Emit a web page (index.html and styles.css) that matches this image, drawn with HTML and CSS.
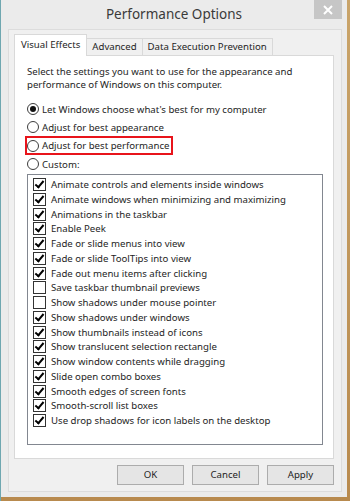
FILE: index.html
```html
<!DOCTYPE html>
<html>
<head>
<meta charset="utf-8">
<link rel="stylesheet" href="styles.css">
</head>
<body>
<div class="window">
  <div class="titlebar">
    <div class="title">Performance Options</div>
    <div class="close"><svg width="10" height="10" viewBox="0 0 10 10"><path d="M1 1L9 9M9 1L1 9" stroke="#fff" stroke-width="2"/></svg></div>
  </div>
  <div class="client">
    <div class="tabs">
      <div class="tab active">Visual Effects</div>
      <div class="tab">Advanced</div>
      <div class="tab">Data Execution Prevention</div>
    </div>
    <div class="panel">
      <p class="intro">Select the settings you want to use for the appearance and performance of Windows on this computer.</p>
      <div class="radios">
        <div class="radio checked"><span class="dot"></span>Let Windows choose what's best for my computer</div>
        <div class="radio"><span class="dot"></span>Adjust for best appearance</div>
        <div class="radio highlight"><span class="dot"></span>Adjust for best performance</div>
        <div class="radio"><span class="dot"></span>Custom:</div>
      </div>
      <div class="list">
        <div class="item"><span class="box on"></span>Animate controls and elements inside windows</div>
        <div class="item"><span class="box on"></span>Animate windows when minimizing and maximizing</div>
        <div class="item"><span class="box on"></span>Animations in the taskbar</div>
        <div class="item"><span class="box on"></span>Enable Peek</div>
        <div class="item"><span class="box on"></span>Fade or slide menus into view</div>
        <div class="item"><span class="box on"></span>Fade or slide ToolTips into view</div>
        <div class="item"><span class="box on"></span>Fade out menu items after clicking</div>
        <div class="item"><span class="box"></span>Save taskbar thumbnail previews</div>
        <div class="item"><span class="box"></span>Show shadows under mouse pointer</div>
        <div class="item"><span class="box on"></span>Show shadows under windows</div>
        <div class="item"><span class="box on"></span>Show thumbnails instead of icons</div>
        <div class="item"><span class="box on"></span>Show translucent selection rectangle</div>
        <div class="item"><span class="box on"></span>Show window contents while dragging</div>
        <div class="item"><span class="box on"></span>Slide open combo boxes</div>
        <div class="item"><span class="box on"></span>Smooth edges of screen fonts</div>
        <div class="item"><span class="box on"></span>Smooth-scroll list boxes</div>
        <div class="item"><span class="box on"></span>Use drop shadows for icon labels on the desktop</div>
      </div>
    </div>
    <div class="buttons">
      <div class="btn">OK</div>
      <div class="btn">Cancel</div>
      <div class="btn">Apply</div>
    </div>
  </div>
</div>
</body>
</html>
```
FILE: styles.css
```css
html, body {
  margin: 0;
  padding: 0;
}
body {
  width: 350px;
  height: 501px;
  overflow: hidden;
  background: linear-gradient(90deg, #6fa7b0 0, #6fa7b0 1px, transparent 1px),
              linear-gradient(180deg, #c9a46a, #b88a4e);
  font-family: "Noto Sans", "Open Sans", sans-serif;
  font-size: 9.65px;
  color: #1e1e1e;
}
.window {
  margin-left: 1px;
  width: 346px;
  height: 497px;
  background: #ebebeb;
  display: flex;
  flex-direction: column;
  box-sizing: border-box;
}
.titlebar {
  position: relative;
  height: 29px;
  flex: none;
  display: flex;
  justify-content: center;
  align-items: center;
}
.title {
  font-size: 13.5px;
  color: #3a3a3a;
  margin-top: -1px;
}
.close {
  position: absolute;
  top: 0;
  right: 5px;
  width: 28px;
  height: 19px;
  background: #c6c6c6;
  display: flex;
  align-items: center;
  justify-content: center;
}
.client {
  flex: 1;
  margin: 0 5px 5px 7px;
  background: #f0f0f0;
  border: 1px solid #dcdcdc;
  padding: 4px 7px 0 5px;
  display: flex;
  flex-direction: column;
}
.tabs {
  display: flex;
  align-items: flex-end;
  height: 21px;
  position: relative;
  z-index: 1;
}
.tab {
  height: 17px;
  line-height: 16px;
  padding: 0 5px;
  border: 1px solid #d9d9d9;
  border-bottom: none;
  margin-left: -1px;
  background: #f0f0f0;
  box-sizing: border-box;
  white-space: nowrap;
}
.tab.active {
  margin-left: 0;
  height: 22px;
  line-height: 19px;
  background: #fff;
  margin-bottom: -1px;
  padding: 0 6px;
}
.panel {
  width: 320px;
  height: 404px;
  box-sizing: border-box;
  background: #fff;
  border: 1px solid #d9d9d9;
  padding: 9px 12px 0 12px;
}
.intro {
  margin: 0;
  line-height: 13px;
}
.radios {
  margin-top: 9px;
}
.radio {
  display: flex;
  align-items: center;
  height: 18.3px;
  white-space: nowrap;
}
.radio.highlight {
  width: max-content;
  padding-right: 2px;
  outline: 2px solid #e8141b;
  height: 15px;
  margin: 1.6px 0 1.7px 0;
}
.dot {
  width: 10px;
  height: 10px;
  border: 1px solid #3c3c3c;
  border-radius: 50%;
  margin-right: 3px;
  flex: none;
  display: flex;
  align-items: center;
  justify-content: center;
}
.radio.checked .dot::after {
  content: "";
  width: 6px;
  height: 6px;
  border-radius: 50%;
  background: #111;
}
.list {
  margin-top: 1px;
  width: 296px;
  height: 271px;
  box-sizing: border-box;
  border: 1px solid #828790;
  padding: 2px 0 0 5px;
}
.item {
  display: flex;
  align-items: center;
  height: 14.75px;
  white-space: nowrap;
}
.box {
  width: 11px;
  height: 11px;
  border: 1px solid #333;
  margin-right: 5px;
  flex: none;
  position: relative;
}
.box.on::after {
  content: "";
  position: absolute;
  left: 3px;
  top: 0px;
  width: 3px;
  height: 7px;
  border: solid #000;
  border-width: 0 2px 2px 0;
  transform: rotate(40deg);
}
.buttons {
  display: flex;
  justify-content: flex-end;
  gap: 8px;
  margin-top: 6px;
}
.btn {
  width: 67px;
  height: 20px;
  box-sizing: border-box;
  border: 1px solid #acacac;
  background: #e5e5e5;
  text-align: center;
  line-height: 18px;
}
```
